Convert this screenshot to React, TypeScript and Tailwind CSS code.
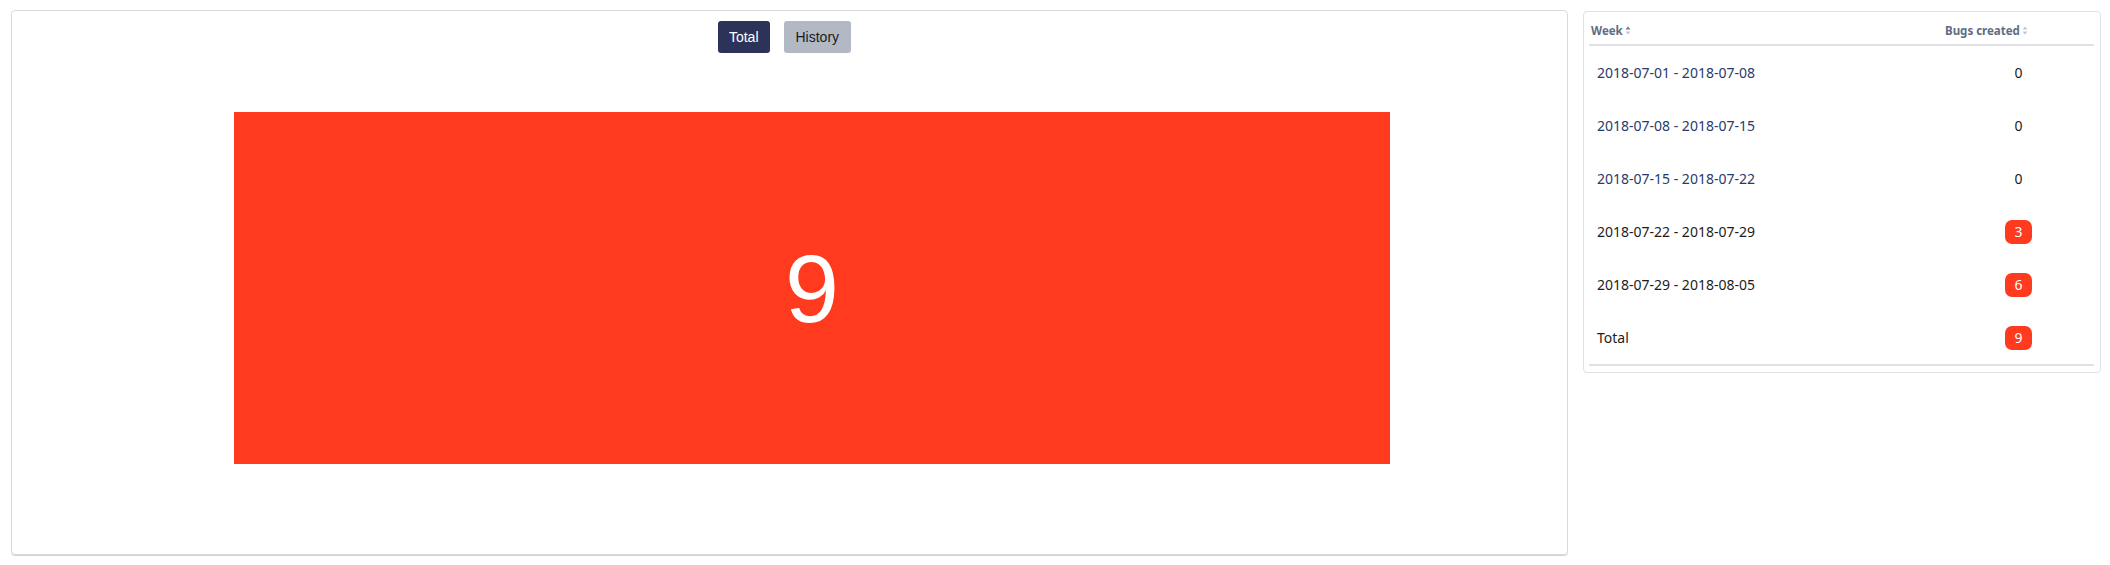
import React from 'react';

type Row = { week: string; bugs: number; link: boolean };

const rows: Row[] = [
    { week: '2018-07-01 - 2018-07-08', bugs: 0, link: true },
    { week: '2018-07-08 - 2018-07-15', bugs: 0, link: true },
    { week: '2018-07-15 - 2018-07-22', bugs: 0, link: true },
    { week: '2018-07-22 - 2018-07-29', bugs: 3, link: false },
    { week: '2018-07-29 - 2018-08-05', bugs: 6, link: false },
];

function SortIcon({ active }: { active?: boolean }) {
    return (
        <svg width="6" height="9" viewBox="0 0 6 9" className="ml-[2px] inline-block">
            <path d="M3 0.5 L5.5 3.5 L0.5 3.5 Z" fill={active ? '#6b778c' : '#c1c7d0'} />
            <path d="M3 8.5 L5.5 5.5 L0.5 5.5 Z" fill="#c1c7d0" />
        </svg>
    );
}

function Count({ value }: { value: number }) {
    if (value === 0) return <span className="text-[#1c1c1c]">0</span>;
    return (
        <span className="inline-flex h-[24px] w-[27px] items-center justify-center rounded-[7px] bg-[#ff3a1f] text-white">
            {value}
        </span>
    );
}

export default function App() {
    const total = rows.reduce((sum, r) => sum + r.bugs, 0);

    return (
        <div className="flex h-[565px] w-[2110px] items-start gap-[15px] bg-white pl-[11px] pt-[10px]">
            <div className="h-[545px] w-[1557px] rounded-[4px] border border-[#d9d9d9] pt-[10px] shadow-[0_1px_0_#d4d4d4]">
                <div className="flex justify-center gap-[14px] pr-[10px] font-['Liberation_Sans',Arial,sans-serif] text-[14px]">
                    <button className="h-[32px] rounded-[3px] bg-[#2c3358] px-[11px] text-white">Total</button>
                    <button className="h-[32px] rounded-[3px] bg-[#b3b9c4] px-[12px] text-[#1a1a1a]">History</button>
                </div>
                <div className="ml-[222px] mt-[59px] flex h-[352px] w-[1156px] items-center justify-center bg-[#ff3a1f] font-['Liberation_Sans',Arial,sans-serif] text-[97px] leading-none text-white">
                    {total}
                </div>
            </div>

            <div className="mt-px w-[518px] rounded-[4px] border border-[#dfe1e6] px-[5px] pb-[6px] pt-[7px] pr-[6px] font-['Noto_Sans',sans-serif] text-[14px]">
                <div className="flex h-[27px] items-center border-b-2 border-[#dfe1e6] pb-[2px] text-[11.5px] font-bold text-[#5e6c84]">
                    <div className="flex flex-1 items-center pl-[2px]">
                        Week
                        <SortIcon active />
                    </div>
                    <div className="flex w-[151px] items-center pl-[2px]">
                        Bugs created
                        <SortIcon />
                    </div>
                </div>
                <div className="border-b-2 border-[#dfe1e6]">
                    {rows.map((r) => (
                        <div key={r.week} className="flex h-[53px] items-center">
                            <div className={`flex-1 pl-[8px] ${r.link ? 'text-[#283a6b]' : 'text-[#1c1c1c]'}`}>{r.week}</div>
                            <div className="w-[151px] text-center">
                                <Count value={r.bugs} />
                            </div>
                        </div>
                    ))}
                    <div className="flex h-[53px] items-center">
                        <div className="flex-1 pl-[8px] text-[#1c1c1c]">Total</div>
                        <div className="w-[151px] text-center">
                            <Count value={total} />
                        </div>
                    </div>
                </div>
            </div>
        </div>
    );
}
